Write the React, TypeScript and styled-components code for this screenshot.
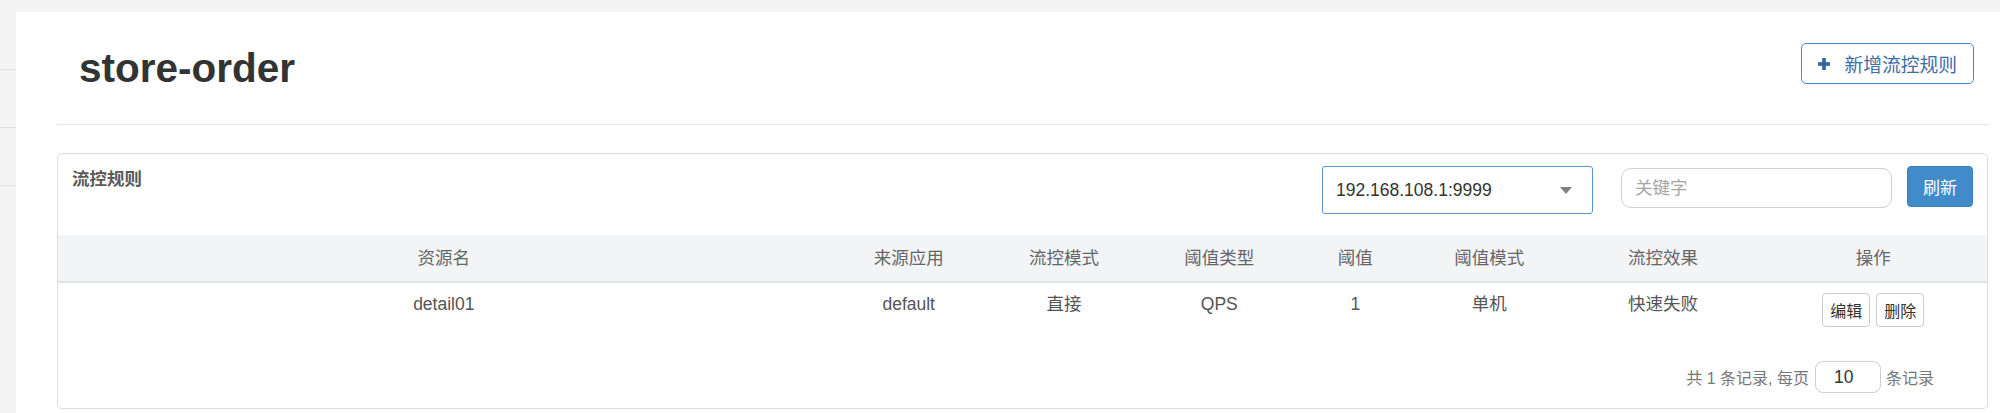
import React from "react";
import styled, { createGlobalStyle } from "styled-components";

const FONT = `"Liberation Sans", "Noto Sans CJK SC", sans-serif`;

const GlobalStyle = createGlobalStyle`
  html, body {
    margin: 0;
    padding: 0;
  }
  body {
    font-family: ${FONT};
    background: #f4f4f4;
    overflow: hidden;
  }
`;

const Page = styled.div`
  display: flex;
  width: 2000px;
  height: 413px;
  background: #f4f4f4;
`;

const Sidebar = styled.div`
  flex-shrink: 0;
  width: 16px;
  padding-top: 12px;
`;

const SidebarItem = styled.div`
  height: 57px;
  border-bottom: 1px solid #e2e2e2;
`;

const Main = styled.div`
  flex: 1;
  margin-top: 12px;
  padding: 0 12px 0 41px;
  background: #fff;
`;

const PageHeader = styled.div`
  display: flex;
  justify-content: space-between;
  align-items: flex-start;
  padding: 31px 14px 34px 22px;
  border-bottom: 1px solid #e5e5e5;
`;

const Title = styled.h1`
  margin: 3px 0 0;
  font-size: 40.5px;
  line-height: 44px;
  font-weight: 700;
  color: #333;
`;

const AddButton = styled.button`
  display: flex;
  align-items: center;
  gap: 15px;
  height: 41px;
  padding: 0 16px;
  border: 1px solid #4a89c8;
  border-radius: 5px;
  background: #fff;
  color: #3b6ea8;
  font-family: ${FONT};
  font-size: 18.75px;
`;

const Panel = styled.div`
  margin-top: 28px;
  padding-bottom: 15px;
  border: 1px solid #dcdcdc;
  border-radius: 5px;
`;

const Toolbar = styled.div`
  display: flex;
  align-items: flex-start;
  padding: 12px 14px 21px 14px;
`;

const PanelTitle = styled.div`
  flex: 1;
  font-size: 17.5px;
  line-height: 26px;
  font-weight: 700;
  color: #5a5a5a;
`;

const Select = styled.div`
  display: flex;
  align-items: center;
  justify-content: space-between;
  box-sizing: border-box;
  width: 271px;
  height: 48px;
  padding: 0 20px 0 13px;
  border: 1px solid #5a96d0;
  border-radius: 3px;
  font-size: 17.5px;
  color: #333;
`;

const Caret = styled.span`
  width: 0;
  height: 0;
  border-left: 6.5px solid transparent;
  border-right: 6.5px solid transparent;
  border-top: 7px solid #808080;
`;

const SearchInput = styled.input`
  box-sizing: border-box;
  width: 271px;
  height: 40px;
  margin: 2px 0 0 28px;
  padding: 0 13px;
  border: 1px solid #cfcfcf;
  border-radius: 10px;
  font-family: ${FONT};
  font-size: 17.5px;
  color: #333;
  outline: none;
  &::placeholder {
    color: #a5a5a5;
  }
`;

const RefreshButton = styled.button`
  box-sizing: border-box;
  width: 66px;
  height: 41px;
  margin-left: 15px;
  padding: 0;
  border: 1px solid #3a7fbd;
  border-radius: 4px;
  background: #428bca;
  color: #fff;
  font-family: ${FONT};
  font-size: 17px;
`;

const Table = styled.table`
  width: 100%;
  table-layout: fixed;
  border-collapse: collapse;
  font-size: 17.5px;
`;

const HeadCell = styled.th`
  padding: 12px 0;
  line-height: 22px;
  background: #f3f4f6;
  border-bottom: 2px solid #e2e3e5;
  font-weight: 400;
  color: #666;
  text-align: center;
`;

const Cell = styled.td`
  padding: 10px 0;
  line-height: 22px;
  vertical-align: top;
  text-align: center;
  color: #555;
`;

const Actions = styled.div`
  display: inline-flex;
  gap: 6px;
`;

const SmallButton = styled.button`
  box-sizing: border-box;
  width: 48px;
  height: 34px;
  padding: 0;
  border: 1px solid #cccccc;
  border-radius: 4px;
  background: #fff;
  color: #333;
  font-family: ${FONT};
  font-size: 16px;
`;

const Pager = styled.div`
  display: flex;
  justify-content: flex-end;
  align-items: center;
  margin-top: 24px;
  padding-right: 53px;
  font-size: 16px;
  color: #777;
`;

const PageSize = styled.input`
  box-sizing: border-box;
  width: 66px;
  height: 32px;
  margin: 0 5px 0 6px;
  padding: 0 0 0 18px;
  border: 1px solid #cfcfcf;
  border-radius: 8px;
  font-family: ${FONT};
  font-size: 17.5px;
  color: #333;
  outline: none;
`;

const PlusIcon = () => (
  <svg width="12" height="12" viewBox="0 0 12 12">
    <rect x="4.2" y="0" width="3.6" height="12" fill="#2c68a3" />
    <rect x="0" y="4.2" width="12" height="3.6" fill="#2c68a3" />
  </svg>
);

const columns = [
  { title: "资源名", width: "40%" },
  { title: "来源应用", width: "8.2%" },
  { title: "流控模式", width: "7.9%" },
  { title: "阈值类型", width: "8.2%" },
  { title: "阈值", width: "5.9%" },
  { title: "阈值模式", width: "8%" },
  { title: "流控效果", width: "10%" },
  { title: "操作", width: "11.8%" },
];

const rules = [
  { resource: "detail01", limitApp: "default", strategy: "直接", grade: "QPS", count: 1, mode: "单机", effect: "快速失败" },
];

export default function App() {
  return (
    <>
      <GlobalStyle />
      <Page>
        <Sidebar>
          <SidebarItem />
          <SidebarItem />
          <SidebarItem />
        </Sidebar>
        <Main>
          <PageHeader>
            <Title>store-order</Title>
            <AddButton>
              <PlusIcon />
              新增流控规则
            </AddButton>
          </PageHeader>
          <Panel>
            <Toolbar>
              <PanelTitle>流控规则</PanelTitle>
              <Select>
                <span>192.168.108.1:9999</span>
                <Caret />
              </Select>
              <SearchInput placeholder="关键字" />
              <RefreshButton>刷新</RefreshButton>
            </Toolbar>
            <Table>
              <colgroup>
                {columns.map(c => (
                  <col key={c.title} style={{ width: c.width }} />
                ))}
              </colgroup>
              <thead>
                <tr>
                  {columns.map(c => (
                    <HeadCell key={c.title}>{c.title}</HeadCell>
                  ))}
                </tr>
              </thead>
              <tbody>
                {rules.map(r => (
                  <tr key={r.resource}>
                    <Cell>{r.resource}</Cell>
                    <Cell>{r.limitApp}</Cell>
                    <Cell>{r.strategy}</Cell>
                    <Cell>{r.grade}</Cell>
                    <Cell>{r.count}</Cell>
                    <Cell>{r.mode}</Cell>
                    <Cell>{r.effect}</Cell>
                    <Cell>
                      <Actions>
                        <SmallButton>编辑</SmallButton>
                        <SmallButton>删除</SmallButton>
                      </Actions>
                    </Cell>
                  </tr>
                ))}
              </tbody>
            </Table>
            <Pager>
              共 1 条记录, 每页
              <PageSize defaultValue="10" />
              条记录
            </Pager>
          </Panel>
        </Main>
      </Page>
    </>
  );
}
